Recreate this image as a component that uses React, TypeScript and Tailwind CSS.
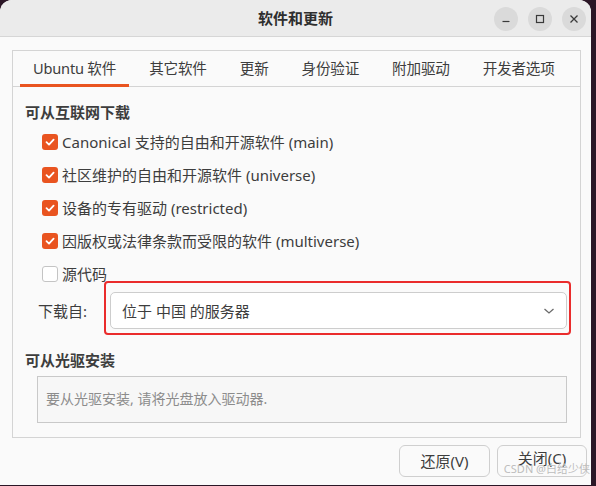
import React from "react";

const FONT = '"Noto Sans", "Noto Sans CJK SC", sans-serif';

function Check({ checked }: { checked: boolean }) {
  if (checked) {
    return (
      <div className="w-[16px] h-[16px] rounded-[3px] bg-[#e95420] flex items-center justify-center shrink-0">
        <svg width="12" height="12" viewBox="0 0 12 12">
          <path d="M2.5 6.2 L5 8.6 L9.6 3.6" fill="none" stroke="#ffffff" strokeWidth="1.8" strokeLinecap="round" strokeLinejoin="round" />
        </svg>
      </div>
    );
  }
  return <div className="w-[16px] h-[16px] rounded-[3px] bg-white border border-[#c4c4c4] shrink-0" />;
}

function Row({ checked, label }: { checked: boolean; label: string }) {
  return (
    <div className="h-[33px] flex items-center gap-[4px] ml-[17px]">
      <Check checked={checked} />
      <span className="text-[15px] text-[#3d3d3d] leading-[20px] whitespace-nowrap">{label}</span>
    </div>
  );
}

export default function App() {
  const tabs = ["Ubuntu 软件", "其它软件", "更新", "身份验证", "附加驱动", "开发者选项"];
  return (
    <div className="w-[596px] h-[486px] bg-[#2b1626] overflow-hidden" style={{ fontFamily: FONT }}>
      <div className="w-[591px] h-[485px] bg-[#fafafa] rounded-t-[12px] flex flex-col overflow-hidden">
        {/* Title bar */}
        <div className="relative h-[37px] bg-[#ebebeb] border-b border-[#d6d6d6] flex items-center justify-center shrink-0">
          <span className="text-[15px] font-bold text-[#2e2e2e] leading-[20px]">软件和更新</span>
          <div className="absolute right-[5px] top-[7px] flex gap-[10px]">
            <div className="w-[24px] h-[24px] rounded-full bg-[#dadada] flex items-center justify-center">
              <svg width="16" height="16" viewBox="0 0 16 16">
                <path d="M4.5 10.5 H11.5" stroke="#3a3a3a" strokeWidth="1.2" />
              </svg>
            </div>
            <div className="w-[24px] h-[24px] rounded-full bg-[#dadada] flex items-center justify-center">
              <svg width="16" height="16" viewBox="0 0 16 16">
                <rect x="4.5" y="4.5" width="7" height="7" fill="none" stroke="#3a3a3a" strokeWidth="1.2" />
              </svg>
            </div>
            <div className="w-[24px] h-[24px] rounded-full bg-[#dadada] flex items-center justify-center">
              <svg width="16" height="16" viewBox="0 0 16 16">
                <path d="M4.5 4.5 L11.5 11.5 M11.5 4.5 L4.5 11.5" stroke="#3a3a3a" strokeWidth="1.3" />
              </svg>
            </div>
          </div>
        </div>

        {/* Notebook */}
        <div className="mt-[13px] ml-[12px] w-[569px] h-[388px] border border-[#d4d4d4] bg-[#fafafa] flex flex-col shrink-0">
          <div className="h-[36px] border-b border-[#d4d4d4] flex items-stretch pl-[7px] gap-[7px]">
            {tabs.map((t, i) => (
              <div key={t} className="relative flex items-center px-[13px] shrink-0">
                <span className="text-[14.6px] text-[#3d3d3d] leading-[20px] -mt-[2px] whitespace-nowrap tracking-[-0.2px]">{t}</span>
                {i === 0 && <div className="absolute left-0 right-0 bottom-[-1px] h-[3px] bg-[#e95420]" />}
              </div>
            ))}
          </div>

          <div className="flex flex-col pl-[12px] pr-[13px] pt-[15px]">
            <div className="text-[15px] font-bold text-[#3d3d3d] leading-[20px]">可从互联网下载</div>
            <div className="mt-[3px] flex flex-col">
              <Row checked label="Canonical 支持的自由和开源软件 (main)" />
              <Row checked label="社区维护的自由和开源软件 (universe)" />
              <Row checked label="设备的专有驱动 (restricted)" />
              <Row checked label="因版权或法律条款而受限的软件 (multiverse)" />
              <Row checked={false} label="源代码" />
            </div>
            <div className="mt-[2px] flex items-center">
              <span className="ml-[13px] w-[72px] text-[15px] text-[#3d3d3d] leading-[20px]">下载自:</span>
              <div className="relative flex-1">
                <div className="h-[37px] bg-white border border-[#cdcdcd] rounded-[5px] flex items-center justify-between pl-[11px] pr-[11px]">
                  <span className="text-[15px] text-[#3d3d3d] leading-[20px]">位于 中国 的服务器</span>
                  <svg width="12" height="8" viewBox="0 0 12 8">
                    <path d="M1.5 2 L6 6 L10.5 2" fill="none" stroke="#6a6a6a" strokeWidth="1.3" />
                  </svg>
                </div>
                <div className="absolute top-[-11px] left-[-6px] right-[-4px] bottom-[-6px] border-2 border-[#ea2c2c] rounded-[4px] pointer-events-none" />
              </div>
            </div>
            <div className="mt-[21px] text-[15px] font-bold text-[#3d3d3d] leading-[20px]">可从光驱安装</div>
            <div className="mt-[6px] ml-[12px] h-[47px] border border-[#c9c9c9] bg-[#f7f7f7] px-[8px] pt-[9px]">
              <span className="text-[14px] text-[#8c8c8c] leading-[20px]">要从光驱安装, 请将光盘放入驱动器.</span>
            </div>
          </div>
        </div>

        {/* Buttons */}
        <div className="relative mt-[7px] flex justify-end gap-[7px] pr-[4px]">
          <div className="w-[91px] h-[32px] border border-[#cfcfcf] rounded-[6px] bg-[#fafafa] flex items-center justify-center">
            <span className="text-[15px] text-[#3d3d3d] leading-[20px]">还原(V)</span>
          </div>
          <div className="w-[90px] h-[32px] border border-[#cfcfcf] rounded-[6px] bg-[#fafafa] flex items-center justify-center">
            <span className="text-[15px] text-[#3d3d3d] leading-[20px] -mt-[6px]">关闭(C)</span>
          </div>
          <div className="absolute right-[1px] top-[17px] text-[11px] leading-[13px] text-[#bdbdbd]">CSDN @白给少侠</div>
        </div>
      </div>
    </div>
  );
}
